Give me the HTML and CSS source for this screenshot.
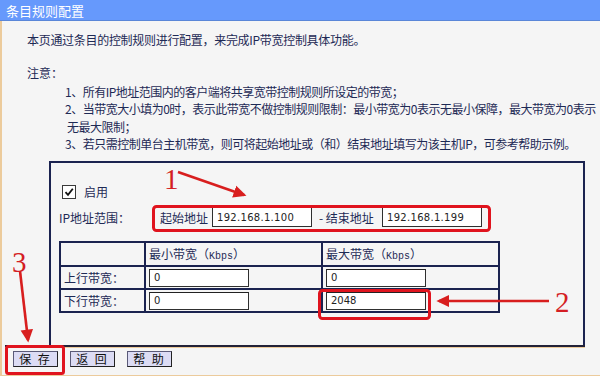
FILE: index.html
```html
<!DOCTYPE html>
<html lang="zh-CN">
<head>
<meta charset="utf-8">
<title>条目规则配置</title>
<link rel="stylesheet" href="styles.css">
</head>
<body>
<div class="screen">
  <div class="titlebar">条目规则配置</div>
  <div class="page">
    <p class="intro">本页通过条目的控制规则进行配置，来完成IP带宽控制具体功能。</p>
    <p class="note-title">注意：</p>
    <div class="notes">
      <div class="note">1、所有IP地址范围内的客户端将共享宽带控制规则所设定的带宽；</div>
      <div class="note">2、当带宽大小填为0时，表示此带宽不做控制规则限制：最小带宽为0表示无最小保障，最大带宽为0表示</div>
      <div class="note">无最大限制；</div>
      <div class="note">3、若只需控制单台主机带宽，则可将起始地址或（和）结束地址填写为该主机IP，可参考帮助示例。</div>
    </div>
    <div class="box">
      <div class="enable-row">
        <span class="checkbox"><svg width="12" height="12" viewBox="0 0 12 12"><path d="M2.5 6.2 L5 8.8 L9.8 2.8" fill="none" stroke="#111" stroke-width="1.8"/></svg></span>
        <span class="enable-label">启用</span>
      </div>
      <div class="ip-row">
        <span class="ip-label">IP地址范围：</span>
        <span class="range">
          <span class="range-label">起始地址</span>
          <span class="field ip-field">192.168.1.100</span>
          <span class="range-sep">- 结束地址</span>
          <span class="field ip-field">192.168.1.199</span>
        </span>
      </div>
      <table class="bw">
        <tr class="head">
          <td class="c1"></td>
          <td class="c2">最小带宽（<span class="unit">Kbps</span>）</td>
          <td class="c3">最大带宽（<span class="unit">Kbps</span>）</td>
        </tr>
        <tr>
          <td class="c1">上行带宽：</td>
          <td class="c2"><span class="field num-field">0</span></td>
          <td class="c3"><span class="field num-field">0</span></td>
        </tr>
        <tr>
          <td class="c1">下行带宽：</td>
          <td class="c2"><span class="field num-field">0</span></td>
          <td class="c3"><span class="field num-field">2048</span></td>
        </tr>
      </table>
    </div>
    <div class="rule"></div>
    <div class="buttons">
      <span class="btn">保 存</span>
      <span class="btn">返 回</span>
      <span class="btn">帮 助</span>
    </div>
  </div>
  <svg class="annot" width="600" height="376" viewBox="0 0 600 376">
    <defs>
      <marker id="ah" markerWidth="6" markerHeight="6" refX="4" refY="3" orient="auto" markerUnits="strokeWidth">
        <path d="M0 0.6 L5 3 L0 5.4 Z" fill="#d81e1e"/>
      </marker>
    </defs>
    <rect x="153.5" y="206.5" width="336" height="24" rx="3" fill="none" stroke="#e0141e" stroke-width="3"/>
    <rect x="319.5" y="290.5" width="110" height="28" rx="3" fill="none" stroke="#e0141e" stroke-width="3"/>
    <rect x="6.5" y="346.5" width="57" height="27" rx="2" fill="none" stroke="#e0141e" stroke-width="3"/>
    <line x1="178" y1="172" x2="244" y2="195" stroke="#d81e1e" stroke-width="2.6" marker-end="url(#ah)"/>
    <line x1="549" y1="301" x2="439" y2="301" stroke="#d81e1e" stroke-width="2.6" marker-end="url(#ah)"/>
    <line x1="20" y1="271" x2="28" y2="340" stroke="#d81e1e" stroke-width="2.6" marker-end="url(#ah)"/>
    <text x="164" y="189" class="num-mark">1</text>
    <text x="555" y="312" class="num-mark">2</text>
    <text x="12" y="272" class="num-mark">3</text>
  </svg>
</div>
</body>
</html>
```
FILE: styles.css
```css
html, body {
  margin: 0;
  padding: 0;
}
body {
  width: 600px;
  height: 376px;
  overflow: hidden;
  background: #f5f5f5;
  font-family: "Noto Sans CJK SC", "Noto Sans", sans-serif;
  font-size: 12px;
  color: #1e2a55;
}
.screen {
  position: relative;
  width: 600px;
  height: 376px;
  overflow: hidden;
}
.titlebar {
  height: 21px;
  line-height: 21px;
  background: #6699fc;
  border-bottom: 1px solid #5a86d8;
  box-sizing: border-box;
  color: #fff;
  font-size: 13px;
  padding-left: 6px;
}
.page {
  border-left: 2px solid #eccb9c;
  height: 355px;
  box-sizing: border-box;
  border-bottom: 1px solid #eccb9c;
}
.intro {
  margin: 0;
  padding: 10px 0 0 25px;
  line-height: 18px;
  letter-spacing: -0.3px;
}
.note-title {
  margin: 15px 0 0 25px;
  line-height: 18px;
}
.notes {
  margin: 1px 0 0 63px;
  white-space: nowrap;
  letter-spacing: -0.5px;
}
.note {
  line-height: 17.4px;
}
.note:nth-child(3) {
  padding-left: 2px;
}
.box {
  margin: 8px 0 0 47px;
  width: 536px;
  height: 184px;
  box-sizing: border-box;
  border: 2px solid #1b2350;
  border-bottom: none;
  padding: 20px 0 0 8px;
}
.enable-row {
  display: flex;
  align-items: center;
  height: 18px;
  padding-left: 3px;
}
.checkbox {
  width: 12px;
  height: 12px;
  border: 1px solid #3a3a3a;
  background: #fff;
  display: flex;
  margin-right: 8px;
}
.enable-label {
  line-height: 18px;
}
.ip-row {
  display: flex;
  align-items: center;
  margin-top: 3px;
  height: 27px;
}
.ip-label {
  width: 93px;
}
.range {
  display: flex;
  align-items: center;
  padding-left: 8px;
}
.range-label {
  width: 52px;
}
.range-sep {
  width: 63px;
  padding-left: 7px;
}
.field {
  display: inline-flex;
  align-items: center;
  box-sizing: border-box;
  background: #fff;
  border: 1px solid #2f2f2f;
  border-top-color: #222;
  font-family: "DejaVu Sans", sans-serif;
  font-size: 10px;
  color: #222;
  padding-left: 4px;
}
.ip-field {
  width: 100px;
  height: 20px;
  letter-spacing: 0.3px;
}
.num-field {
  width: 100px;
  height: 18px;
}
.bw {
  margin-top: 10px;
  border-collapse: collapse;
  border: 2px solid #1b2350;
  width: 441px;
}
.bw td {
  border: 2px solid #1b2350;
  height: 21px;
  padding: 0 0 0 3px;
  white-space: nowrap;
}
.bw .c1 { width: 80px; }
.bw .c2 { width: 172px; }
.bw .head td { height: 22px; }
.unit {
  font-family: "Liberation Mono", monospace;
  font-size: 10px;
}
.rule {
  margin: 0 0 0 3px;
  width: 580px;
  height: 2px;
  background: #222238;
  border-bottom: 1px solid #eccb9c;
}
.buttons {
  display: flex;
  gap: 12px;
  padding: 3px 0 0 11px;
}
.btn {
  width: 45px;
  height: 16px;
  box-sizing: border-box;
  background: #dcdcf4;
  border: 1px solid #5a5a78;
  border-right-color: #222;
  border-bottom-color: #222;
  font-size: 12px;
  line-height: 14px;
  text-align: center;
  color: #111;
  letter-spacing: 2px;
}
.annot {
  position: absolute;
  left: 0;
  top: 0;
  pointer-events: none;
}
.num-mark {
  font-family: "Liberation Serif", serif;
  font-size: 29px;
  fill: #d41e24;
}
```
